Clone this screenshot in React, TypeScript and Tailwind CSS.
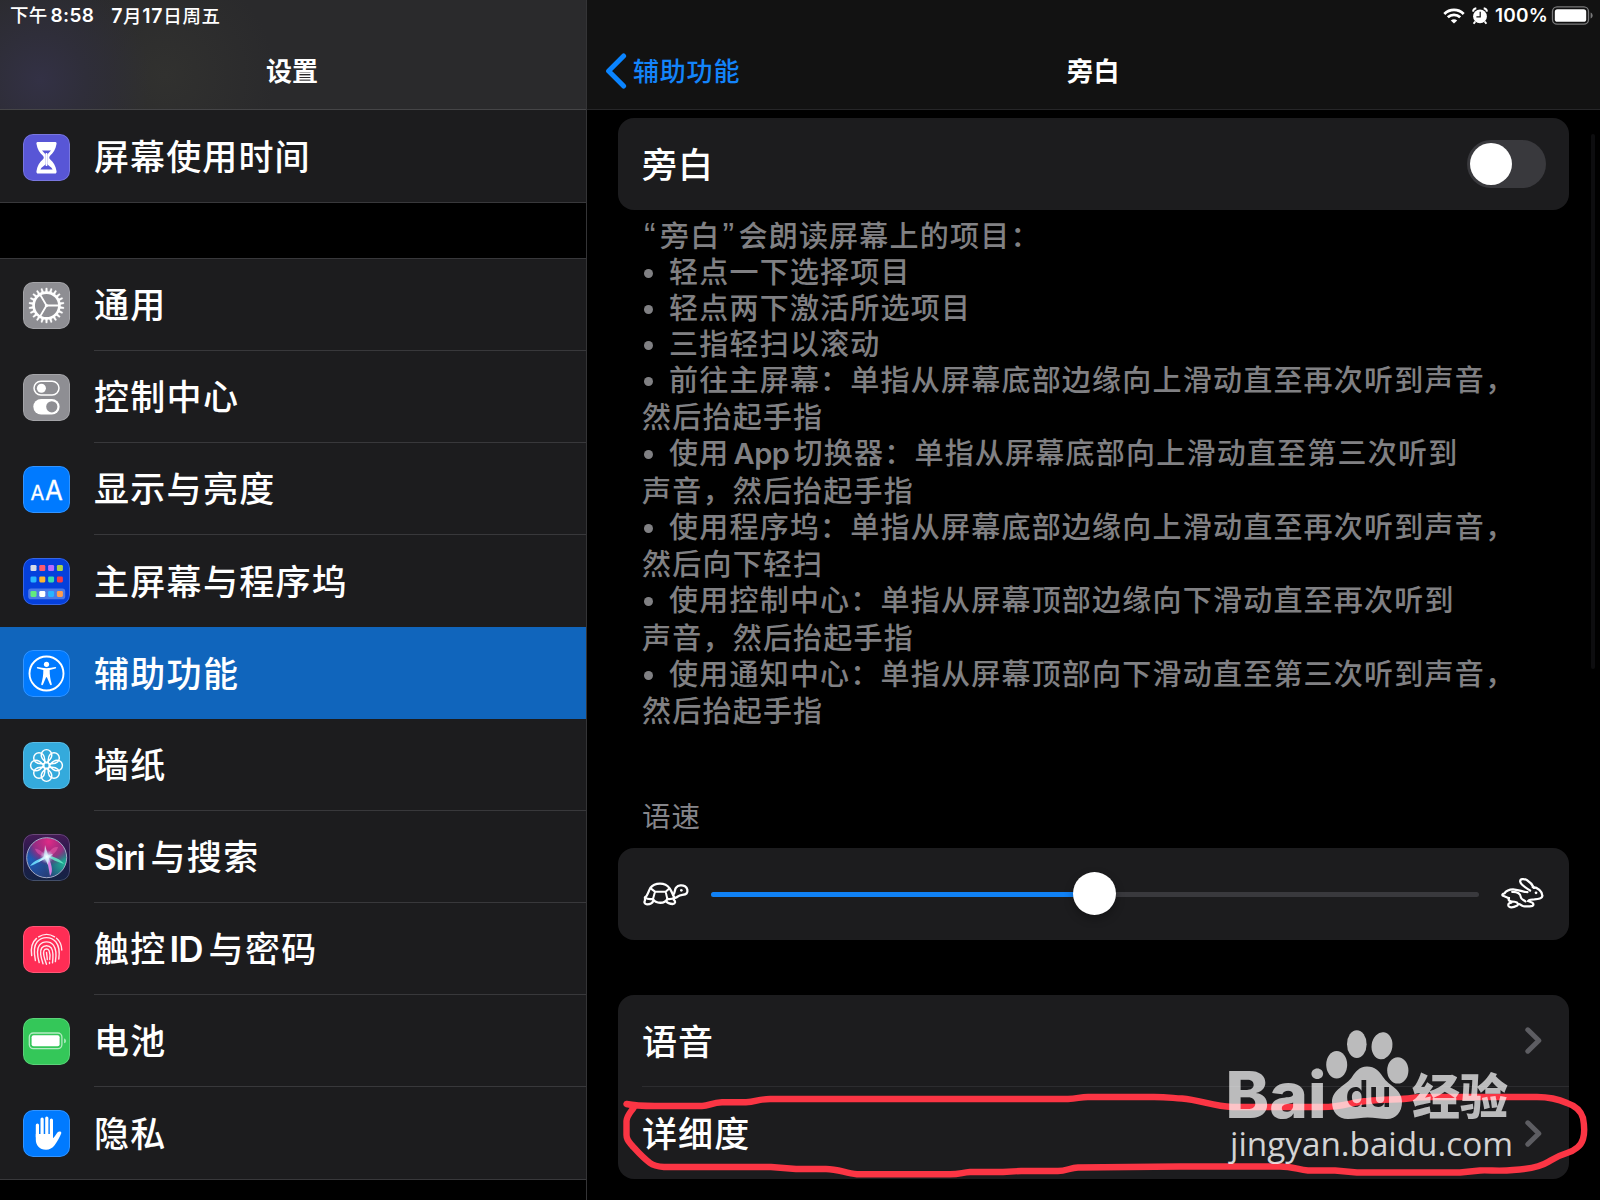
import type { ReactNode } from "react";
import clsx from "clsx";

interface SidebarItem {
  label: ReactNode;
  key: string;
  tile: string;
  icon: ReactNode;
  active?: boolean;
}

const GearIcon = () => (
  <svg viewBox="0 0 47 47" className="h-full w-full" fill="none" stroke="white">
    <circle cx="23.5" cy="23.5" r="12.9" strokeWidth="2.7" />
    {Array.from({ length: 22 }, (_, i) => (
      <path
        key={i}
        d="M22.4 10.4L22.8 5.9H24.2L24.6 10.4Z"
        strokeWidth="0.3"
        fill="white"
        transform={`rotate(${(i * 360) / 22} 23.5 23.5)`}
      />
    ))}
    <path d="M23.5 23.5H36M23.5 23.5L17.2 12.8M23.5 23.5L17.2 34.2" strokeWidth="1.8" />
    <circle cx="23.5" cy="23.5" r="1.6" fill="white" stroke="none" />
  </svg>
);

const ControlIcon = () => (
  <svg viewBox="0 0 47 47" className="h-full w-full">
    <rect x="11" y="7.2" width="25" height="13.8" rx="6.9" fill="none" stroke="white" strokeWidth="1.5" />
    <circle cx="18.4" cy="14.2" r="4.5" fill="white" />
    <rect x="10.3" y="25" width="26.3" height="15.6" rx="7.8" fill="white" />
    <circle cx="28.8" cy="32.8" r="5.6" fill="#8e8e93" />
  </svg>
);

const DisplayIcon = () => (
  <svg
    viewBox="0 0 47 47"
    className="h-full w-full"
    fill="white"
    fontFamily='"Inter", sans-serif'
    fontWeight="400"
    stroke="white"
    strokeWidth="0.3"
  >
    <text x="7.4" y="33.5" fontSize="20.5" textLength="13.8" lengthAdjust="spacingAndGlyphs">A</text>
    <text x="21.9" y="33.5" fontSize="26.8" textLength="17.8" lengthAdjust="spacingAndGlyphs">A</text>
  </svg>
);

const appColors = [
  ["#d8dbe8", "#ff5a6e", "#b66cff", "#a8d54a"],
  ["#28b4ff", "#ffb62e", "#35dcae", "#f73a46"],
  ["#62ec7c", "#ffffff", "#28b4ff", "#ff9d4d"],
];

const HomeScreenIcon = () => (
  <svg viewBox="0 0 47 47" className="h-full w-full">
    <rect x="5.2" y="30.6" width="37" height="10.6" rx="2.8" fill="#4a79e6" />
    {appColors.map((row, r) =>
      row.map((color, c) => (
        <rect
          key={color + c}
          x={7.5 + c * 8.8}
          y={[7, 18.4, 32.9][r]}
          width="6"
          height="6"
          rx="1.3"
          fill={color}
        />
      ))
    )}
  </svg>
);

const AccessibilityIcon = () => (
  <svg viewBox="0 0 47 47" className="h-full w-full" fill="none" stroke="white">
    <circle cx="23.5" cy="23.5" r="17" strokeWidth="1.9" />
    <circle cx="23.5" cy="14.3" r="2.6" fill="white" stroke="none" />
    <path
      d="M14.6 17.1C20 18.5 27 18.5 32.4 17.1C33.4 17.1 33.4 18.3 32.5 18.6L26.7 20.1C26.6 24.5 27.3 29.5 28.8 34.3C28.8 35.4 27.4 35.5 27 34.6L23.9 27.2H23.1L20 34.6C19.6 35.5 18.2 35.4 18.2 34.3C19.7 29.5 20.4 24.5 20.3 20.1L14.5 18.6C13.6 18.3 13.6 17.1 14.6 17.1Z"
      fill="white"
      stroke="none"
    />
  </svg>
);

const FlowerIcon = () => (
  <svg viewBox="0 0 47 47" className="h-full w-full" fill="none" stroke="white" strokeWidth="1.45">
    {Array.from({ length: 8 }, (_, i) => (
      <path
        key={i}
        d="M23.5 20.6C20.6 18.6 18.2 15.8 18.2 12.9A5.3 5.3 0 0 1 28.8 12.9C28.8 15.8 26.4 18.6 23.5 20.6Z"
        transform={`rotate(${i * 45} 23.5 23.5)`}
      />
    ))}
    <circle cx="23.5" cy="23.5" r="2.9" />
  </svg>
);

const SiriIcon = () => (
  <svg viewBox="0 0 47 47" className="h-full w-full">
    <defs>
      <linearGradient id="siri-bg" x1="0" y1="0" x2="0" y2="1">
        <stop offset="0" stopColor="#451b56" />
        <stop offset="0.5" stopColor="#20194a" />
        <stop offset="1" stopColor="#142444" />
      </linearGradient>
      <radialGradient id="siri-pink" cx="0.55" cy="0.1" r="0.6">
        <stop offset="0" stopColor="#e02a86" />
        <stop offset="0.65" stopColor="#b62480" stopOpacity="0.75" />
        <stop offset="1" stopColor="#8a2178" stopOpacity="0" />
      </radialGradient>
      <radialGradient id="siri-blue" cx="0.1" cy="0.55" r="0.55">
        <stop offset="0" stopColor="#1d5bb8" />
        <stop offset="1" stopColor="#1d5bb8" stopOpacity="0" />
      </radialGradient>
      <radialGradient id="siri-green" cx="0.95" cy="0.65" r="0.5">
        <stop offset="0" stopColor="#20b394" />
        <stop offset="1" stopColor="#20b394" stopOpacity="0" />
      </radialGradient>
      <radialGradient id="siri-glow">
        <stop offset="0" stopColor="#ffffff" />
        <stop offset="0.3" stopColor="#d9f6ff" stopOpacity="0.8" />
        <stop offset="1" stopColor="#9fe0ff" stopOpacity="0" />
      </radialGradient>
    </defs>
    <rect width="47" height="47" fill="url(#siri-bg)" />
    <circle cx="23.7" cy="23.7" r="20" fill="#26407c" />
    <circle cx="23.7" cy="23.7" r="20" fill="url(#siri-blue)" />
    <circle cx="23.7" cy="23.7" r="20" fill="url(#siri-green)" />
    <circle cx="23.7" cy="23.7" r="20" fill="url(#siri-pink)" />
    <path d="M24 22C20 19 15 14 12 15C14 20 19 23 24 22Z" fill="#e05ab5" opacity="0.55" />
    <path d="M24 22C26 18 29 12 35 13C34 18 29 22 24 22Z" fill="#f062ae" opacity="0.5" />
    <path d="M24 23C19 23 10 27 7 32C13 30 20 26 24 23Z" fill="#6fe0ff" opacity="0.9" />
    <path d="M24 22C31 22 37 25 41 30C34 28 28 25 24 22Z" fill="#63efc8" opacity="0.85" />
    <path d="M23 23C25 30 26 36 27 42C31 37 28 29 25 22Z" fill="#ea83ef" opacity="0.9" />
    <path d="M22 11L25 21L30 20L26 24L25 31L22 25L15 28L21 22Z" fill="#e9fbff" opacity="0.75" />
    <circle cx="23.8" cy="22.8" r="7" fill="url(#siri-glow)" />
    <circle cx="23.7" cy="23.7" r="20" fill="none" stroke="#a3abc5" strokeWidth="1" />
  </svg>
);

const FingerprintIcon = () => (
  <svg
    viewBox="0 0 47 47"
    className="h-full w-full"
    fill="none"
    stroke="#ffe9ee"
    strokeWidth="1.4"
    strokeLinecap="round"
  >
    <path d="M15.6 10.8A15.3 15.3 0 0 1 31.6 10.8" />
    <path d="M8.7 29.6C7.6 22.5 9 16.2 13.5 12.4" />
    <path d="M33.5 12.2C36.8 14.9 38.6 18.5 38.8 24" />
    <path d="M12.4 34.5C10.6 26 10.6 20 14.2 15.8C19.1 10.2 27.9 10.2 32.8 15.8C36.4 20.3 36.8 26 35.8 33" />
    <path d="M16.2 36.5C13.8 28 13.6 22.8 16.5 19.1C20 14.8 27 14.8 30.4 19.1C33.6 23.4 33.5 29 32.4 35.6" />
    <path d="M20 37.8C17.5 30.5 16.5 25.3 18.7 22C20.9 18.9 26 18.9 28.3 22C30.2 25 30.3 30 29.5 36.8" />
    <path d="M23.5 38.3C20.8 31 19.8 27.2 20.9 24.7C21.9 22.4 25.1 22.4 26.1 24.7C27.2 27.5 27.2 31 26.7 33.5" />
    <path d="M23.5 26.4C23.9 29.8 24.2 31.5 24.3 33.6M26.5 36.3V37.5" />
  </svg>
);

const BatteryTileIcon = () => (
  <svg viewBox="0 0 47 47" className="h-full w-full">
    <rect x="6.3" y="15" width="32.6" height="15.6" rx="4" fill="none" stroke="#b5ebc4" strokeWidth="1.3" />
    <rect x="8.6" y="17.3" width="28" height="11" rx="2" fill="white" />
    <path d="M41 20.4C43.8 21 43.8 24.7 41 25.3Z" fill="#a2e6b5" />
  </svg>
);

const HandIcon = () => (
  <svg viewBox="0 0 47 47" className="h-full w-full" fill="none" stroke="white" strokeLinecap="round">
    <path d="M14.4 15V27M19.1 9V25M23.8 8V25M28.4 10V25" strokeWidth="3.2" />
    <path
      d="M12.8 24H30V28.3C31.8 27 33 24.3 34.4 22.6C35.8 20.9 38.7 21.3 38.3 23.2C36.8 26.8 34 32 31.6 35.3C29.3 38.3 26.6 39.7 23 39.7C16.5 39.7 12.8 35.5 12.8 29.5Z"
      fill="white"
      stroke="none"
    />
  </svg>
);

const TurtleIcon = () => (
  <svg
    viewBox="40 36 138 72"
    className="h-6 w-[46px]"
    fill="none"
    stroke="white"
    strokeWidth="6.8"
    strokeLinecap="round"
    strokeLinejoin="round"
  >
    <path d="M46 83C55 76 55 65 62 54C70 43 80 41 91 41C102 41 112 44 120 55C127 66 129 73 134 83" />
    <path d="M64 56L76 65H108L118 56M76 65L70 87M108 65L113 87" strokeWidth="6" />
    <path d="M46 83C58 91 70 86 70 87C78 102 106 102 113 87C122 88 129 87 134 83" />
    <path d="M46 83V91C43 96 44 103 52 103C60 103 69 99 71 92M134 83L132 89C138 94 138 101 129 102C121 102 111 98 110 93" />
    <path d="M130 75C137 69 134 60 139 53C146 45 158 44 166 49C174 54 175 65 171 70C164 77 153 72 145 79C142 82 138 84 134 83" />
    <circle cx="155" cy="61" r="4" fill="white" stroke="none" />
  </svg>
);

const RabbitIcon = () => (
  <svg
    viewBox="182 110 130 100"
    className="h-[33px] w-[43px]"
    fill="none"
    stroke="white"
    strokeWidth="6.8"
    strokeLinecap="round"
    strokeLinejoin="round"
  >
    <path d="M206 174C198 171 194 169 188 167C184 164 187 160 192 160C199 150 211 147 223 148C238 149 247 155 262 156" />
    <path d="M270 151C258 143 242 135 240 124C239 114 252 115 260 119C270 125 278 135 282 143" />
    <path d="M278 141C294 142 306 153 307 166C308 175 294 177 283 178C275 178 267 180 264 183C271 186 280 186 280 193C280 200 268 199 254 199C248 199 246 196 236 192" />
    <path d="M216 155C232 154 242 162 242 171C242 178 252 180 256 184" />
    <path d="M206 174C202 183 211 184 223 185C234 186 237 195 228 198C221 202 206 205 204 196C203 190 208 188 213 188" />
    <circle cx="288" cy="158" r="4.2" fill="white" stroke="none" />
  </svg>
);

const sidebarItems: SidebarItem[] = [
  { key: "general", label: "通用", tile: "bg-[#8e8e93]", icon: <GearIcon /> },
  { key: "control", label: "控制中心", tile: "bg-[#8e8e93]", icon: <ControlIcon /> },
  { key: "display", label: "显示与亮度", tile: "bg-[#007aff]", icon: <DisplayIcon /> },
  { key: "home", label: "主屏幕与程序坞", tile: "bg-[#0540dc]", icon: <HomeScreenIcon /> },
  { key: "accessibility", label: "辅助功能", tile: "bg-[#007aff]", icon: <AccessibilityIcon />, active: true },
  { key: "wallpaper", label: "墙纸", tile: "bg-[#34aadc]", icon: <FlowerIcon /> },
  {
    key: "siri",
    label: (
      <>
        <span className="mr-[6px] font-semibold tracking-[-1.2px]">Siri</span>与搜索
      </>
    ),
    tile: "bg-[#20194a]",
    icon: <SiriIcon />,
  },
  {
    key: "touchid",
    label: (
      <>
        触控<span className="mr-[6px] ml-[3px] font-semibold tracking-[-1px]">ID</span>与密码
      </>
    ),
    tile: "bg-[#ff2d55]",
    icon: <FingerprintIcon />,
  },
  { key: "battery", label: "电池", tile: "bg-[#34c759]", icon: <BatteryTileIcon /> },
  { key: "privacy", label: "隐私", tile: "bg-[#007aff]", icon: <HandIcon /> },
];

// cont marks the wrapped second half of a bullet
const helpLines: { text: ReactNode; cont?: boolean }[] = [
  { text: "轻点一下选择项目" },
  { text: "轻点两下激活所选项目" },
  { text: "三指轻扫以滚动" },
  { text: "前往主屏幕：单指从屏幕底部边缘向上滑动直至再次听到声音，" },
  { text: "然后抬起手指", cont: true },
  {
    text: (
      <>
        使用<span className="mx-1 font-semibold tracking-[-0.4px]">App</span>切换器：单指从屏幕底部向上滑动直至第三次听到
      </>
    ),
  },
  { text: "声音，然后抬起手指", cont: true },
  { text: "使用程序坞：单指从屏幕底部边缘向上滑动直至再次听到声音，" },
  { text: "然后向下轻扫", cont: true },
  { text: "使用控制中心：单指从屏幕顶部边缘向下滑动直至再次听到" },
  { text: "声音，然后抬起手指", cont: true },
  { text: "使用通知中心：单指从屏幕顶部向下滑动直至第三次听到声音，" },
  { text: "然后抬起手指", cont: true },
];

const Quote = ({ children }: { children: ReactNode }) => (
  <span className='inline-block w-[18px] pl-[2px] font-["Liberation_Sans",sans-serif] text-[35px] leading-[0] tracking-normal'>
    {children}
  </span>
);

const Tile = ({ tile, children }: { tile: string; children: ReactNode }) => (
  <div className={clsx("relative h-[47px] w-[47px] shrink-0 overflow-hidden rounded-[10px]", tile)}>
    {children}
    <div className="absolute inset-0 rounded-[10px] border border-white/20" />
  </div>
);

const Chevron = () => (
  <svg viewBox="0 0 17 27" className="h-[27px] w-[17px]" fill="none" stroke="#5d5d62" strokeWidth="5">
    <path d="M2.8 2.8L13.8 13.5L2.8 24.2" strokeLinecap="round" strokeLinejoin="round" />
  </svg>
);

const Sidebar = () => (
  <aside className="flex h-full w-[587px] shrink-0 flex-col border-r border-[#343436] bg-black">
    <header className="flex h-[110px] shrink-0 flex-col border-b border-[#454547] bg-[#2a2a2c] bg-[radial-gradient(circle_at_40px_80px,#333145_0,#2f2e3a_45px,transparent_110px),radial-gradient(circle_at_165px_75px,#31312f_0,transparent_110px)]">
      <div className="flex h-[31px] items-center gap-[17px] pt-[2px] pl-[10px] text-[18.5px] font-medium">
        <span className="tracking-[0.3px]">
          下午<span className="ml-[3px] text-[19px] font-semibold">8:58</span>
        </span>
        <span className="tracking-[0.7px]">
          <span className="text-[19.5px] font-semibold">7</span>月
          <span className="text-[19.5px] font-semibold">17</span>日周五
        </span>
      </div>
      <h1 className="flex h-[79px] items-center justify-center pt-[3px] pr-[2px] text-[26px] font-bold">设置</h1>
    </header>

    <div className="flex h-[93px] shrink-0 items-center border-b border-[#38383b] bg-[#1c1c1e] pt-[2px] pl-[23px] text-[35px] font-medium tracking-[1.3px]">
      <Tile tile="bg-[#5856d6]">
        <svg viewBox="0 0 47 47" className="h-full w-full" fill="white">
          <path d="M14.5 8H32.5C33.4 8 33.8 9 33.5 10C32.6 15.4 30.3 18.8 27.5 21.2C25.8 22.7 25.8 24.3 27.5 25.8C30.3 28.2 32.6 31.6 33.5 37C33.8 38.5 33.3 39.6 31.8 39.6H15.2C13.7 39.6 13.2 38.5 13.5 37C14.4 31.6 16.7 28.2 19.5 25.8C21.2 24.3 21.2 22.7 19.5 21.2C16.7 18.8 14.4 15.4 13.5 10C13.2 9 13.6 8 14.5 8Z" />
          <path
            d="M19 16.5H28L24.3 20.5V30.2C25.3 31.7 28.6 32.7 29.6 35.5H17.4C18.4 32.7 21.7 31.7 22.7 30.2V20.5Z"
            fill="#5856d6"
          />
          <path d="M22.7 19V32H24.3V19Z" />
        </svg>
      </Tile>
      <span className="ml-6 pt-[1px] tracking-[1.1px]">屏幕使用时间</span>
    </div>

    <nav className="mt-[55px] shrink-0 border-y border-[#38383b] bg-[#1c1c1e]">
      {sidebarItems.map((item, i) => (
        <a
          key={item.key}
          className={clsx("flex h-[92px] items-center pl-[23px]", item.active && "bg-[#1065bc]")}
        >
          <Tile tile={item.tile}>{item.icon}</Tile>
          <span
            className={clsx(
              "ml-6 flex h-full flex-1 items-center pt-[2px] text-[35px] font-medium tracking-[1.3px]",
              i < sidebarItems.length - 1 && !item.active && !sidebarItems[i + 1].active && "border-b border-[#38383b]"
            )}
          >
            <span>{item.label}</span>
          </span>
        </a>
      ))}
    </nav>
  </aside>
);

const StatusIcons = () => (
  <div className="flex h-[31px] items-center justify-end pt-[1px] pr-[7px]">
    <svg viewBox="0 0 22 16" className="h-4 w-[22px]" fill="none" stroke="white" strokeWidth="2.8">
      <path d="M1.3 5.9C6.7 0.6 15.3 0.6 20.7 5.9M4.8 9.3C8.3 6 13.7 6 17.2 9.3" />
      <path d="M11 15.6L7.8 12.4C9.6 10.7 12.4 10.7 14.2 12.4Z" fill="white" stroke="none" />
    </svg>
    <svg viewBox="0 0 16 18" className="ml-[7px] h-[18px] w-4" fill="none" stroke="white">
      <circle cx="8" cy="9.4" r="6.9" fill="white" stroke="none" />
      <path d="M1 4.6C1.2 2.8 2.4 1.6 4.3 1.3M15 4.6C14.8 2.8 13.6 1.6 11.7 1.3M3.2 14.6L1.6 16.8M12.8 14.6L14.4 16.8" strokeWidth="1.9" />
      <path d="M8.2 4.8V9.8H4.4" stroke="#121212" strokeWidth="1.2" />
    </svg>
    <span className="ml-[7px] pt-[1px] text-[19px] font-semibold tracking-[0.2px]">100%</span>
    <svg viewBox="0 0 42 19" className="ml-[3px] h-[19px] w-[42px]">
      <rect x="1.5" y="0.9" width="36" height="17.2" rx="4.6" fill="none" stroke="#79797a" strokeWidth="1.3" />
      <rect x="3.8" y="3.2" width="31.4" height="12.6" rx="2.6" fill="white" />
      <path d="M39.6 6.4C42.3 7.4 42.3 11.6 39.6 12.6Z" fill="#79797a" />
    </svg>
  </div>
);

const Watermark = () => (
  <svg
    viewBox="0 0 300 150"
    className="pointer-events-none absolute top-[1020px] left-[1220px] h-[150px] w-[300px]"
    fill="white"
  >
    <defs>
      <mask id="paw-mask" maskUnits="userSpaceOnUse" x="100" y="40" width="100" height="70">
        <rect x="100" y="40" width="100" height="70" fill="white" />
        <text
          x="125.5"
          y="87"
          fontSize="37"
          fontWeight="600"
          fontFamily='"Inter", sans-serif'
          textLength="46"
          lengthAdjust="spacingAndGlyphs"
          fill="black"
        >
          du
        </text>
      </mask>
    </defs>
    <g opacity="0.7">
      <text
        x="5.5"
        y="98"
        fontSize="64"
        fontWeight="800"
        fontFamily='"Inter", sans-serif'
        textLength="101"
        lengthAdjust="spacingAndGlyphs"
      >
        Bai
      </text>
      <ellipse cx="116.7" cy="44.7" rx="10.5" ry="13.7" />
      <ellipse cx="136.8" cy="24.2" rx="9.8" ry="13.9" />
      <ellipse cx="162" cy="25.8" rx="10.4" ry="13.6" transform="rotate(8 162 25.8)" />
      <ellipse cx="177.8" cy="50.4" rx="10.6" ry="13.2" />
      <path
        d="M147 46.5C139 46.5 135.5 52 132 57C127 65 112 69 112 82C112 92 118 99 128 99C136 99 142 97.5 147.5 97.5C155 97.5 160 99 167 99C176 99 182 92 182 82C182 69 169 66 163 57C159 51 155 46.5 147 46.5Z"
        mask="url(#paw-mask)"
      />
      <text
        x="192"
        y="93.5"
        fontSize="48"
        fontWeight="900"
        fontFamily='"Noto Sans CJK SC", sans-serif'
        textLength="96"
        lengthAdjust="spacingAndGlyphs"
      >
        经验
      </text>
    </g>
    <text
      x="10"
      y="135.5"
      fontSize="32.5"
      fontWeight="500"
      fontFamily='"Open Sans", sans-serif'
      fillOpacity="0.82"
      textLength="283"
      lengthAdjust="spacingAndGlyphs"
    >
      jingyan.baidu.com
    </text>
  </svg>
);

const Detail = () => (
  <main className="flex h-full min-w-0 flex-1 flex-col bg-black">
    <header className="flex h-[110px] shrink-0 flex-col border-b border-[#262628] bg-[#121212]">
      <StatusIcons />
      <div className="grid h-[79px] grid-cols-3 items-center pt-[2px] text-[26px] tracking-[0.6px]">
        <a className="flex items-center pl-[18px] text-[#1384fa]">
          <svg viewBox="0 0 22 36" className="h-9 w-[22px]" fill="none" stroke="#0a84ff" strokeWidth="5">
            <path d="M18.6 3L3.6 18L18.6 33" strokeLinecap="round" strokeLinejoin="round" />
          </svg>
          <span className="ml-[6px] pt-[1px] font-medium tracking-[0.8px]">辅助功能</span>
        </a>
        <h2 className="pt-[1px] text-center font-bold">旁白</h2>
      </div>
    </header>

    <div className="flex flex-col pt-2 pr-[31.5px] pl-[31px]">
      <section className="flex h-[92px] items-center justify-between rounded-2xl bg-[#1c1c1e] pr-[23px] pl-6">
        <span className="pt-[2px] text-[35px] font-medium tracking-[1.1px]">旁白</span>
        <div className="flex h-12 w-[79px] items-center rounded-full bg-[#39393d] pl-[3px]">
          <div className="h-[42px] w-[42px] rounded-full bg-white" />
        </div>
      </section>

      <div className="mt-[9px] pl-6 text-[29px] leading-[36px] font-medium tracking-[1.22px] whitespace-nowrap text-[#808083]">
        <p className="h-9">
          <Quote>“</Quote>旁白<Quote>”</Quote>会朗读屏幕上的项目：
        </p>
        {helpLines.map((line, i) => (
          <p key={i} className={clsx("flex", line.cont && "mt-[1.1px] mb-[0.4px]")}>
            {!line.cont && (
              <span className="flex w-[27px] items-center pt-[1px] pl-[2px]">
                <span className="h-[9px] w-[9px] rounded-full bg-[#808083]" />
              </span>
            )}
            <span>{line.text}</span>
          </p>
        ))}
      </div>

      <h3 className="mt-[69px] flex h-[36px] items-center pl-6 text-[28.5px] tracking-[0.9px] text-[#85858a]">语速</h3>
      <section className="mt-[13px] flex h-[92px] items-center rounded-2xl bg-[#1c1c1e] pl-[25px]">
        <TurtleIcon />
        <div className="relative ml-[22px] h-[5px] w-[768px] rounded-full bg-[#39393d]">
          <div className="h-full w-[384px] rounded-full bg-[#1081f5]" />
          <div className="absolute -top-[19.5px] left-[362px] h-[43px] w-[43px] rounded-full bg-white shadow-[0_4px_10px_rgba(0,0,0,0.3)]" />
        </div>
        <div className="mb-[2px] ml-[22px]">
          <RabbitIcon />
        </div>
      </section>

      <section className="mt-[55px] rounded-2xl bg-[#1c1c1e] pl-6 text-[35px] font-medium tracking-[1.1px]">
        <div className="flex h-[92px] items-center justify-between border-b border-[#2c2c2f] pr-[27px]">
          <span className="pt-[2px]">语音</span>
          <Chevron />
        </div>
        <div className="flex h-[92px] items-center justify-between pr-[27px]">
          <span className="pt-[2px]">详细度</span>
          <Chevron />
        </div>
      </section>
    </div>
  </main>
);

export default function App() {
  return (
    <div className='relative flex h-[1200px] w-[1600px] overflow-hidden bg-black font-["Inter","Noto_Sans_CJK_SC",sans-serif] text-white'>
      <Sidebar />
      <Detail />

      {/* scroll indicator */}
      <div className="absolute top-[134px] left-[1591px] h-[535px] w-1 rounded-full bg-[#0d0d0f]" />

      {/* hand-drawn ring around the last row */}
      <svg
        viewBox="600 1080 1000 120"
        className="pointer-events-none absolute top-[1080px] left-[600px] h-[120px] w-[1000px]"
        fill="none"
        stroke="#fb3544"
        strokeWidth="6.4"
        strokeLinecap="round"
        strokeLinejoin="round"
      >
        <path d="M626.5 1104C636 1106 642 1106 655 1106H702C709 1106 712 1102.5 722 1102.2H746C756 1102 758 1099 770 1099H1068C1078 1098.5 1080 1097 1088 1097H1154C1168 1097 1172 1098 1182 1098.5C1200 1100 1214 1106.5 1232 1107H1322C1345 1107 1350 1102 1368 1101C1385 1099 1400 1100 1412 1098C1422 1096.5 1430 1097 1440 1097H1537C1548 1097 1558 1099 1567 1103C1576 1106 1581 1111 1583 1118C1584.5 1126 1584.5 1134 1583 1139C1581 1146 1574 1151 1567 1153C1557 1156 1553 1159 1548 1162C1540 1167 1530 1169 1513 1170C1500 1171.5 1490 1170 1480 1170.5L1460 1172.5H1357L1335 1170.5H1308C1298 1169.5 1292 1166.5 1280 1166.5H1180L1078 1167.5C1070 1168 1066 1171 1058 1171H1021L1003 1172H970C962 1172.5 960 1174.3 950 1174.3H857C845 1173 838 1169 826 1169H796L771 1167H664C658 1166.5 654 1166 650 1163C642 1157 637 1151 632 1145.5C629 1142 626.5 1140 626.5 1135V1121C627 1115 631 1112 634 1107" />
      </svg>

      <Watermark />
    </div>
  );
}
